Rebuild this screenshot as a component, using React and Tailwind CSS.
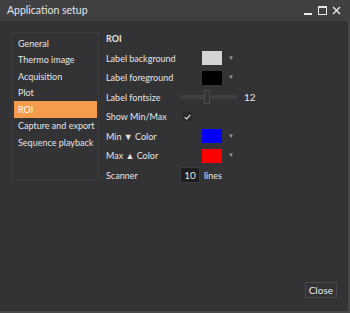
import React from "react";

const navItems = [
  "General",
  "Thermo image",
  "Acquisition",
  "Plot",
  "ROI",
  "Capture and export",
  "Sequence playback",
];

function Arrow() {
  return <span className="ml-[6px] mt-[-2px] text-[6px] text-[#9a9a9a]">▼</span>;
}

function Swatch({ color }) {
  return (
    <div className="ml-[22px] flex items-center">
      <div className={`h-[14px] w-[20px] ${color}`} />
      <Arrow />
    </div>
  );
}

export default function App() {
  return (
    <div
      className="flex h-[313px] w-[350px] flex-col whitespace-nowrap bg-[#333335] text-[#e4e4e4]"
      style={{ fontFamily: 'Lato, "Noto Sans", sans-serif' }}
    >
      {/* title bar */}
      <div className="flex h-[21px] items-center justify-between bg-[#404043] pl-[7px] pr-[9px] text-[10.5px]">
        <span>Application setup</span>
        <div className="flex items-center gap-[5px]">
          <svg width="9" height="9" viewBox="0 0 9 9">
            <rect x="0" y="7" width="8" height="2" fill="#e8e8e8" />
          </svg>
          <svg width="9" height="9" viewBox="0 0 9 9">
            <rect x="0.5" y="0.5" width="8" height="8" fill="none" stroke="#e8e8e8" />
            <rect x="0" y="0" width="9" height="2" fill="#e8e8e8" />
          </svg>
          <svg width="9" height="9" viewBox="0 0 9 9">
            <path d="M1 1 L8 8 M8 1 L1 8" stroke="#e8e8e8" strokeWidth="1.4" />
          </svg>
        </div>
      </div>

      <div className="flex flex-1 flex-col border-r-2 border-b-2 border-[#48484b]">
        <div className="flex flex-1 pt-[11px] pl-[12px]">
          {/* nav list */}
          <div className="h-[148px] w-[87px] shrink-0 border border-[#3d3d40] px-[1px] pt-[2px] text-[9px]">
            {navItems.map((item) => (
              <div
                key={item}
                className={`flex h-[16.5px] items-center pl-[4px] ${
                  item === "ROI" ? "bg-[#f59b4c] text-white" : ""
                }`}
              >
                {item}
              </div>
            ))}
          </div>

          {/* settings */}
          <div className="ml-[7px] mt-[-3px] flex flex-col text-[9px]">
            <div className="flex h-[19.5px] items-center font-bold">ROI</div>
            <div className="flex h-[19.5px] items-center">
              <span className="w-[74px]">Label background</span>
              <Swatch color="bg-[#d4d4d4]" />
            </div>
            <div className="flex h-[19.5px] items-center">
              <span className="w-[74px]">Label foreground</span>
              <Swatch color="bg-black" />
            </div>
            <div className="flex h-[19.5px] items-center">
              <span className="w-[74px]">Label fontsize</span>
              <div className="relative flex h-[14px] w-[57px] items-center">
                <div className="h-[4px] w-full bg-[#3e3e41]" />
                <div className="absolute left-[24px] top-0 h-[14px] w-[6px] border border-[#4c4c50] bg-[#333335]" />
              </div>
              <span className="ml-[7px] text-[10px]">12</span>
            </div>
            <div className="flex h-[19.5px] items-center">
              <span className="w-[77px]">Show Min/Max</span>
              <div className="flex h-[9px] w-[9px] items-center justify-center bg-[#2a2a2c]">
                <svg width="7" height="6" viewBox="0 0 7 6">
                  <path d="M0.7 3.2 L2.6 5 L6.3 0.8" fill="none" stroke="#e8e8e8" strokeWidth="1.1" />
                </svg>
              </div>
            </div>
            <div className="flex h-[19.5px] items-center">
              <span className="w-[74px]">Min ▼ Color</span>
              <Swatch color="bg-[#0000ff]" />
            </div>
            <div className="flex h-[19.5px] items-center">
              <span className="w-[74px]">Max ▲ Color</span>
              <Swatch color="bg-[#ff0000]" />
            </div>
            <div className="flex h-[19.5px] items-center">
              <span className="w-[74px]">Scanner</span>
              <div className="flex h-[16px] w-[20px] items-center justify-center border border-[#3c3c3f] bg-[#1e1e20] text-[10px]">
                10
              </div>
              <span className="ml-[4px]">lines</span>
            </div>
          </div>
        </div>

        <div className="flex justify-end pb-[13px] pr-[11px]">
          <button className="h-[16px] border border-[#48484b] px-[3px] text-[10px] leading-none text-[#e8e8e8]">
            Close
          </button>
        </div>
      </div>
    </div>
  );
}
